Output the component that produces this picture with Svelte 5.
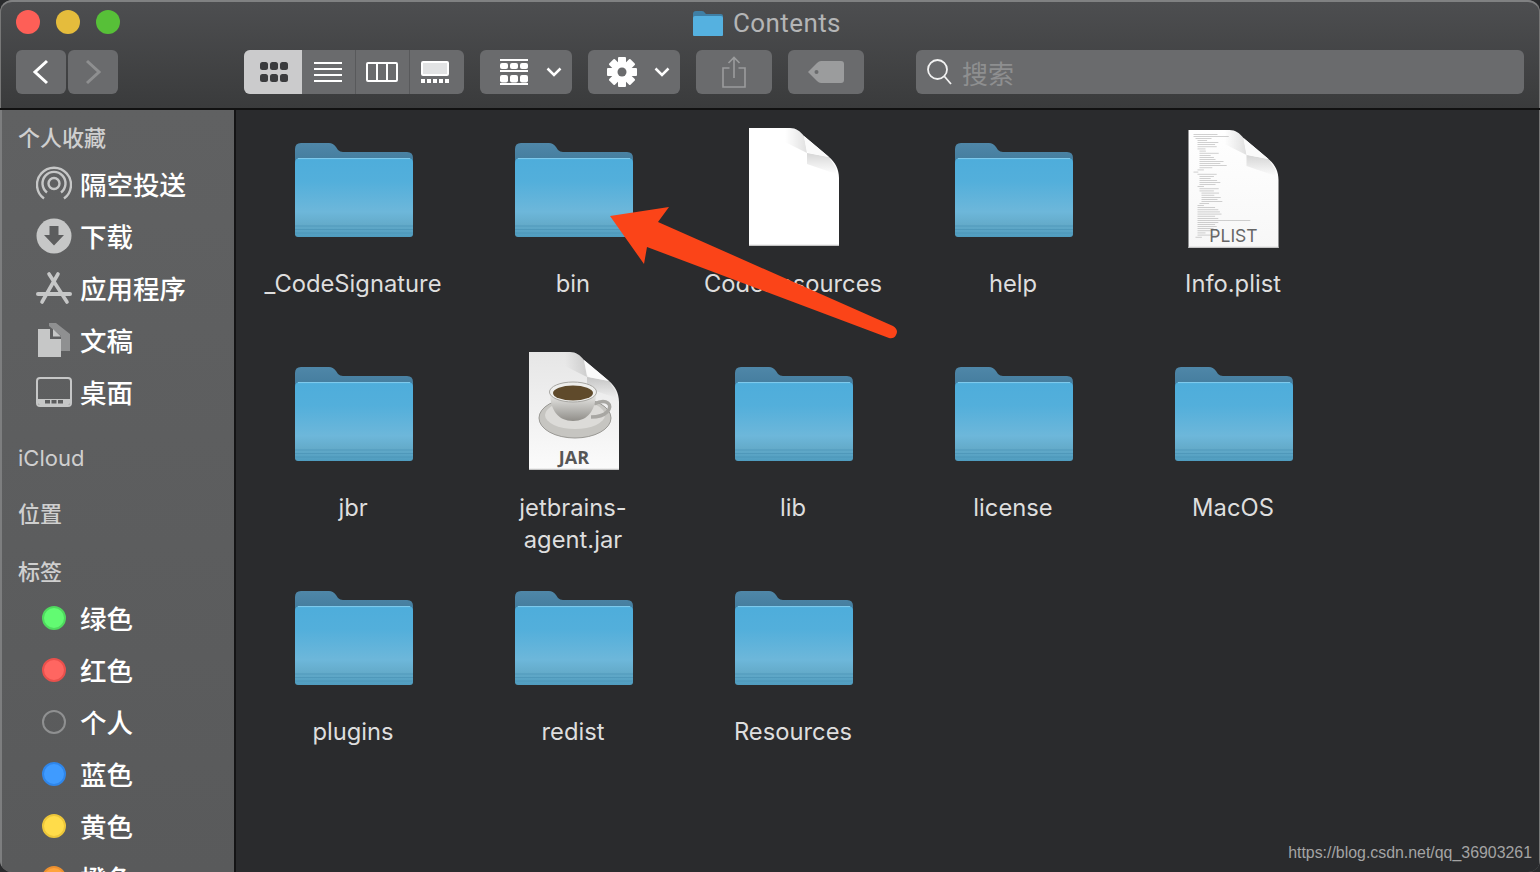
<script>
  const favorites = [
    { name: '隔空投送', icon: 'airdrop' },
    { name: '下载', icon: 'download' },
    { name: '应用程序', icon: 'apps' },
    { name: '文稿', icon: 'docs' },
    { name: '桌面', icon: 'desktop' }
  ];

  const tags = [
    { name: '绿色', fill: '#62fb72', edge: '#4fd95e' },
    { name: '红色', fill: '#ff6661', edge: '#e9504c' },
    { name: '个人', fill: 'transparent', edge: '#8f9091' },
    { name: '蓝色', fill: '#3f9bff', edge: '#2f86ea' },
    { name: '黄色', fill: '#ffdc4a', edge: '#ecc63a' },
    { name: '橙色', fill: '#ffa43c', edge: '#ec9030' }
  ];

  const files = [
    { name: '_CodeSignature', kind: 'folder' },
    { name: 'bin', kind: 'folder' },
    { name: 'CodeResources', kind: 'doc' },
    { name: 'help', kind: 'folder' },
    { name: 'Info.plist', kind: 'plist' },
    { name: 'jbr', kind: 'folder' },
    { name: 'jetbrains-\nagent.jar', kind: 'jar' },
    { name: 'lib', kind: 'folder' },
    { name: 'license', kind: 'folder' },
    { name: 'MacOS', kind: 'folder' },
    { name: 'plugins', kind: 'folder' },
    { name: 'redist', kind: 'folder' },
    { name: 'Resources', kind: 'folder' }
  ];

  // tiny code lines on the plist preview: [indent, width]
  const plistLines = [
    [5, 30], [5, 44], [7, 20], [9, 12], [9, 26], [9, 22], [9, 24], [9, 10], [11, 8],
    [11, 24], [11, 14], [11, 18], [11, 20], [11, 30], [11, 26], [11, 34], [11, 16], [9, 8],
    [5, 6], [9, 24], [11, 18], [11, 14], [11, 22], [11, 26], [11, 20], [9, 8], [11, 24],
    [11, 18], [13, 22], [13, 16], [13, 24], [13, 20], [13, 26], [11, 12], [9, 8], [9, 22],
    [9, 26], [9, 28], [9, 30], [9, 22], [9, 26], [9, 66], [9, 26], [9, 22], [9, 24], [9, 20],
    [9, 18], [9, 10], [9, 24], [7, 8]
  ];
</script>

{#snippet docSheet(id, top, bottom)}
  <defs>
    <linearGradient id="{id}-sheet" x1="0" y1="0" x2="0" y2="1">
      <stop offset="0" stop-color={top} />
      <stop offset="1" stop-color={bottom} />
    </linearGradient>
    <linearGradient id="{id}-under" x1="0" y1="0" x2="0" y2="1">
      <stop offset="0" stop-color="#000" stop-opacity="0.16" />
      <stop offset="1" stop-color="#000" stop-opacity="0" />
    </linearGradient>
    <linearGradient id="{id}-side" x1="0" y1="0" x2="1" y2="0">
      <stop offset="0" stop-color="#000" stop-opacity="0" />
      <stop offset="1" stop-color="#000" stop-opacity="0.12" />
    </linearGradient>
  </defs>
  <path d="M0 0H41C47 0 51 3 55 8L80 29C86 34 90 41 90 50V118H0Z" fill="url(#{id}-sheet)" />
  <path d="M36 0H41C47 0 51 3 55 8L58 25L36 14Z" fill="url(#{id}-side)" />
  <path d="M58 25L80 29L87 40V46L58 36Z" fill="url(#{id}-under)" />
  <path d="M55 8L58 23Q59 25 62 25.500L80 29Z" fill="#fafafa" />
  <path d="M0 117.400H90" stroke="#c4c4c4" stroke-width="1.200" />
{/snippet}

<div class="window">
  <header class="toolbar">
    <div class="title">
      <svg width="30" height="25" viewBox="0 0 30 25">
        <path d="M0 3Q0 0 3 0H9Q11 0 12 2L13 3H28Q30 3 30 5V12H0Z" fill="#3f7fa5" />
        <path d="M0 7Q0 5 2 5H28Q30 5 30 7V24Q30 25 29 25H1Q0 25 0 24Z" fill="#55b1e0" />
      </svg>
      <span>Contents</span>
    </div>
    <div class="tools">
      <div class="nav">
        <button class="btn nav-btn" aria-label="Back">
          <svg width="18" height="26" viewBox="0 0 18 26"><path d="M15 2L3 13L15 24" class="line white" /></svg>
        </button>
        <button class="btn nav-btn" aria-label="Forward">
          <svg width="18" height="26" viewBox="0 0 18 26"><path d="M3 2L15 13L3 24" class="line dim" /></svg>
        </button>
      </div>

      <div class="views btn">
        <span class="view active">
          <svg width="28" height="20" viewBox="0 0 28 20" fill="#3b3c3e">
            {#each [0, 10, 20] as x}
              {#each [0, 12] as y}
                <rect {x} {y} width="8" height="8" rx="2.500" />
              {/each}
            {/each}
          </svg>
        </span>
        <span class="view v2">
          <svg width="28" height="20" viewBox="0 0 28 20" fill="#fff">
            <rect y="0" width="28" height="2" /><rect y="6" width="28" height="2" />
            <rect y="12" width="28" height="2" /><rect y="18" width="28" height="2" />
          </svg>
        </span>
        <span class="view v3">
          <svg width="32" height="20" viewBox="0 0 32 20" fill="none" stroke="#fff" stroke-width="2">
            <rect x="1" y="1" width="30" height="18" rx="1" /><path d="M11 1V19M21 1V19" />
          </svg>
        </span>
        <span class="view v4">
          <svg width="28" height="22" viewBox="0 0 28 22">
            <rect x="1" y="1" width="26" height="13" rx="1" fill="#e2e3e4" stroke="#fff" stroke-width="2" />
            {#each [0, 6, 12, 18, 24] as x}
              <rect {x} y="18" width="4" height="4" fill="#fff" />
            {/each}
          </svg>
        </span>
      </div>

      <button class="btn drop arrange" aria-label="Arrange">
        <svg width="28" height="26" viewBox="0 0 28 26" fill="#fff">
          <rect width="28" height="2" /><rect y="11" width="28" height="2" /><rect y="24" width="28" height="2" />
          {#each [0, 10, 20] as x}
            <rect {x} y="4" width="8" height="6" rx="2" /><rect {x} y="16" width="8" height="7.500" rx="2" />
          {/each}
        </svg>
        <svg class="chev" width="16" height="10" viewBox="0 0 16 10"><path d="M1.500 1.500L8 8L14.500 1.500" class="line white thin" /></svg>
      </button>

      <button class="btn drop action" aria-label="Action">
        <svg width="30" height="30" viewBox="0 0 30 30">
          {#each [0, 45, 90, 135] as deg}
            <rect x="11" y="0" width="8" height="30" rx="1" fill="#fff" transform="rotate({deg} 15 15)" />
          {/each}
          <circle cx="15" cy="15" r="10" fill="#fff" />
          <circle cx="15" cy="15" r="4.500" fill="#6a6b6d" />
        </svg>
        <svg class="chev" width="16" height="10" viewBox="0 0 16 10"><path d="M1.500 1.500L8 8L14.500 1.500" class="line white thin" /></svg>
      </button>

      <button class="btn share" aria-label="Share">
        <svg width="24" height="32" viewBox="0 0 24 32" fill="none" stroke="#9b9c9d" stroke-width="1.600">
          <path d="M7.500 12H1V31H23V12H16.500" /><path d="M12 22V1.500M6.500 7L12 1.500L17.500 7" />
        </svg>
      </button>

      <button class="btn tag" aria-label="Tag">
        <svg width="36" height="22" viewBox="0 0 36 22">
          <path d="M0 11L9 2Q11 0 13 0H33Q36 0 36 3V19Q36 22 33 22H13Q11 22 9 20Z" fill="#9b9c9d" />
          <circle cx="8.500" cy="11" r="2" fill="#6a6b6d" />
        </svg>
      </button>

      <div class="btn search">
        <svg width="26" height="28" viewBox="0 0 26 28" fill="none" stroke="#f2f2f2" stroke-width="1.800">
          <circle cx="11.500" cy="11.500" r="9.500" /><path d="M18.500 18.500L25 26" />
        </svg>
        <span>搜索</span>
      </div>
    </div>
  </header>

  <div class="body">
    <aside class="sidebar">
      <h4>个人收藏</h4>
      {#each favorites as item}
        <div class="row">
          <span class="row-icon">
            {#if item.icon === 'airdrop'}
              <svg width="36" height="36" viewBox="0 0 36 36" fill="none" stroke="#c6c7c7" stroke-width="2.400">
                <path d="M8 32.500A17 17 0 1 1 28 32.500" /><path d="M11 26.500A11.500 11.500 0 1 1 25 26.500" />
                <circle cx="18" cy="17.500" r="5.500" />
              </svg>
            {:else if item.icon === 'download'}
              <svg width="36" height="36" viewBox="0 0 36 36">
                <circle cx="18" cy="18" r="17.500" fill="#c6c7c7" />
                <path d="M13.500 8H22.500V17H28L18 27.500L8 17H13.500Z" fill="#5c5d5e" />
              </svg>
            {:else if item.icon === 'apps'}
              <svg width="36" height="34" viewBox="0 0 36 34" fill="none" stroke="#c6c7c7" stroke-width="4" stroke-linecap="round">
                <path d="M22 3L6 31M13 3L31 31" stroke-width="3.600" /><path d="M2 23H34" />
              </svg>
            {:else if item.icon === 'docs'}
              <svg class="docs-icon" width="32" height="34" viewBox="0 0 32 34">
                <path d="M11 0H18L32 11V28H23V13L11 3Z" fill="#8f9091" />
                <path d="M0 6H12V16H23V34H0Z" fill="#c6c7c7" />
                <path d="M15 6L23 13.500H15Z" fill="#c6c7c7" />
              </svg>
            {:else}
              <svg width="36" height="30" viewBox="0 0 36 30">
                <rect x="1" y="1" width="34" height="28" rx="3" fill="none" stroke="#c6c7c7" stroke-width="2" />
                <path d="M2 22H34V26Q34 28 32 28H4Q2 28 2 26Z" fill="#c6c7c7" />
                <rect x="9" y="23" width="5" height="3.500" fill="#5c5d5e" /><rect x="15.500" y="23" width="5" height="3.500" fill="#5c5d5e" /><rect x="22" y="23" width="5" height="3.500" fill="#5c5d5e" />
              </svg>
            {/if}
          </span>
          <span>{item.name}</span>
        </div>
      {/each}
      <h4 class="cloud">iCloud</h4>
      <h4 class="place">位置</h4>
      <h4 class="tag-head">标签</h4>
      {#each tags as t}
        <div class="row">
          <span class="row-icon">
            <i class="dot" style="background: {t.fill}; border-color: {t.edge}"></i>
          </span>
          <span>{t.name}</span>
        </div>
      {/each}
    </aside>

    <main class="content">
      <div class="grid">
        {#each files as file, i}
          <div class="cell">
            <div class="icon {file.kind}">
              {#if file.kind === 'folder'}
                <svg width="118" height="94" viewBox="0 0 118 94">
                  <defs>
                    <linearGradient id="front{i}" x1="0" y1="0" x2="0" y2="1">
                      <stop offset="0" stop-color="#4eaddb" />
                      <stop offset="0.3" stop-color="#53afdb" />
                      <stop offset="0.68" stop-color="#6db7da" />
                      <stop offset="0.84" stop-color="#64abca" />
                      <stop offset="1" stop-color="#4f9cbf" />
                    </linearGradient>
                    <linearGradient id="back{i}" x1="0" y1="0" x2="0" y2="1">
                      <stop offset="0" stop-color="#4f87a8" />
                      <stop offset="1" stop-color="#3d7698" />
                    </linearGradient>
                  </defs>
                  <path d="M0 6Q0 0 6 0H34Q38 0 41 4L43 7Q45 9 48 9H112Q118 9 118 15V30H0Z" fill="url(#back{i})" />
                  <path d="M0 20Q0 15 5 15H113Q118 15 118 20V91Q118 94 115 94H3Q0 94 0 91Z" fill="url(#front{i})" />
                  <path d="M3 15.600H115" stroke="#83cdee" stroke-width="1" />
                  <path d="M0 83H118M0 86.500H118M0 90H118" stroke="#4a93b6" stroke-width="1" opacity="0.7" />
                </svg>
              {:else if file.kind === 'doc'}
                <svg width="90" height="118" viewBox="0 0 90 118">
                  {@render docSheet('doc', '#ffffff', '#ffffff')}
                </svg>
              {:else if file.kind === 'plist'}
                <svg width="91" height="118" viewBox="0 0 90 118">
                  {@render docSheet('pl', '#ffffff', '#f7f7f7')}
                  {#each plistLines as [x, w], n}
                    <rect {x} y={4 + n * 2.1} width={w * 0.8} height="0.500" fill="#a2a2a2" />
                  {/each}
                  <text x="45" y="112" text-anchor="middle" class="plist-label">PLIST</text>
                </svg>
              {:else}
                <svg width="90" height="118" viewBox="0 0 90 118">
                  {@render docSheet('jar', '#e6e6e6', '#fbfbfb')}
                  <defs>
                    <linearGradient id="cup" x1="0" y1="0" x2="0" y2="1">
                      <stop offset="0" stop-color="#f2f2f0" />
                      <stop offset="1" stop-color="#908e89" />
                    </linearGradient>
                  </defs>
                  <ellipse cx="46" cy="66" rx="36" ry="20" fill="#c6c5c1" stroke="#9a9995" />
                  <ellipse cx="46" cy="63" rx="30" ry="14" fill="#dcdbd8" />
                  <path d="M65 52C78 46 85 53 78 60C74 64 68 65 62 65" fill="none" stroke="#a8a7a3" stroke-width="3.500" />
                  <path d="M21 40C21 58 29 69 44 69C59 69 67 58 67 40Z" fill="url(#cup)" />
                  <ellipse cx="44" cy="40" rx="23.500" ry="10" fill="#eeeeec" stroke="#a7a6a2" />
                  <ellipse cx="44" cy="41" rx="20" ry="7.500" fill="#5f4a2b" />
                  <text x="45" y="112" text-anchor="middle" class="jar-label">JAR</text>
                </svg>
              {/if}
            </div>
            <div class="label">{file.name}</div>
          </div>
        {/each}
      </div>
    </main>
  </div>

  <!-- red annotation drawn on top of the screenshot -->
  <svg class="arrow" width="1540" height="872" viewBox="0 0 1540 872">
    <path d="M610 216L669 207L658 222L893 326Q899 330 896 335Q894 339 889 338L647 247L644 264Z" fill="#fb4418" />
  </svg>
  <div class="watermark">https://blog.csdn.net/qq_36903261</div>
</div>

<style>
  :global(body) {
    margin: 0;
    background: #2a2b2d;
    overflow: hidden;
  }

  .window {
    position: relative;
    width: 1540px;
    height: 872px;
    display: flex;
    flex-direction: column;
    overflow: hidden;
    border-radius: 12px;
    background: #2a2b2d;
    box-shadow: inset 0 0 0 1px #777;
    font-family: Inter, "Noto Sans CJK SC", sans-serif;
  }

  .toolbar {
    height: 108px;
    flex: none;
    box-sizing: border-box;
    background: linear-gradient(#4d4e50, #3a3b3c);
    border-top: 2px solid #808182;
    border-left: 1px solid #777;
    border-right: 1px solid #777;
    border-radius: 12px 12px 0 0;
    position: relative;
  }

  .title {
    height: 42px;
    padding-right: 6px;
    display: flex;
    align-items: center;
    justify-content: center;
    gap: 10px;
    color: #b4b5b6;
    font-size: 26px;
    font-family: Roboto, sans-serif;
    letter-spacing: 0.4px;
  }

  .title::before {
    content: '';
    position: absolute;
    left: 15px;
    top: 8px;
    height: 24px;
    border-radius: 50%;
    background: #fe5f57;
    width: 24px;
    box-shadow: 40px 0 0 #e5bc3c, 80px 0 0 #57c038;
  }

  .tools {
    display: flex;
    align-items: stretch;
    height: 44px;
    margin-top: 6px;
    padding-left: 15px;
  }

  .btn {
    background: #6a6b6d;
    border: none;
    border-radius: 6px;
    padding: 0;
    display: flex;
    align-items: center;
    justify-content: center;
  }

  .nav {
    display: flex;
    gap: 2px;
    margin-right: 126px;
  }

  .nav-btn {
    width: 50px;
  }

  .line {
    fill: none;
    stroke-width: 3;
  }

  .white {
    stroke: #fff;
  }

  .dim {
    stroke: #8e8f90;
  }

  .thin {
    stroke-width: 2.500;
  }

  .views {
    width: 220px;
    margin-right: 16px;
    overflow: hidden;
    justify-content: flex-start;
    align-items: stretch;
  }

  .view {
    display: flex;
    align-items: center;
    justify-content: center;
    box-sizing: border-box;
  }

  .active {
    width: 58px;
    background: #cbcbcc;
    padding-left: 2px;
  }

  .v2 {
    width: 54px;
    padding-right: 2px;
    border-right: 1px solid #58595b;
  }

  .v3 {
    width: 54px;
    padding-right: 2px;
    border-right: 1px solid #58595b;
  }

  .v4 {
    width: 54px;
    padding-right: 4px;
  }

  .drop {
    width: 92px;
    margin-right: 16px;
    gap: 0;
    justify-content: flex-start;
  }

  .arrange > svg:first-child {
    margin-left: 20px;
    margin-right: 18px;
  }

  .action > svg:first-child {
    margin-left: 19px;
    margin-right: 17px;
  }

  .share,
  .tag {
    width: 76px;
    margin-right: 16px;
  }

  .tag {
    margin-right: 52px;
  }

  .search {
    width: 608px;
    justify-content: flex-start;
    padding-left: 10px;
    box-sizing: border-box;
    gap: 10px;
    color: #8e8f90;
    font-size: 26px;
    font-family: "Noto Sans CJK SC", sans-serif;
  }

  .body {
    flex: 1;
    min-height: 0;
    display: flex;
    border-top: 2px solid #111;
  }

  .sidebar {
    width: 236px;
    flex: none;
    box-sizing: border-box;
    background: linear-gradient(#606162, #595a5b);
    border-right: 2px solid #141415;
    border-left: 2px solid #7d7e7f;
    padding-left: 16px;
    padding-top: 10px;
    overflow: hidden;
    color: #fff;
    font-family: "Noto Sans CJK SC", sans-serif;
  }

  h4 {
    margin: 0;
    height: 32px;
    line-height: 32px;
    font-size: 22px;
    font-weight: 500;
    color: #cfcfcf;
  }

  .cloud {
    margin-top: 24px;
    font-weight: 400;
    font-family: Inter, sans-serif;
  }

  .place {
    margin-top: 22px;
  }

  .tag-head {
    margin-top: 26px;
  }

  .row {
    height: 52px;
    display: flex;
    align-items: center;
    font-size: 26.500px;
    line-height: 52px;
    font-weight: 500;
  }

  h4 + .row {
    margin-top: 6px;
  }

  .row-icon {
    width: 44px;
    margin-left: 18px;
    margin-right: 0;
    display: flex;
    align-items: center;
    flex: none;
  }

  .docs-icon {
    margin-left: 2px;
  }

  .dot {
    display: block;
    box-sizing: border-box;
    width: 24px;
    height: 24px;
    margin-left: 6px;
    border-radius: 50%;
    border: 2px solid;
  }

  .content {
    flex: 1;
    min-width: 0;
    background: #2a2b2d;
    padding-left: 7px;
    border-right: 1px solid #777;
  }

  .grid {
    display: grid;
    grid-template-columns: repeat(5, 220px);
    grid-auto-rows: 224px;
    padding-top: 18px;
  }

  .cell {
    display: flex;
    flex-direction: column;
    align-items: center;
  }

  .icon {
    height: 118px;
    display: flex;
    align-items: flex-end;
    margin-bottom: 22px;
  }

  .folder {
    height: 109px;
    margin-top: 9px;
    padding-left: 2px;
  }

  .icon svg {
    display: block;
  }

  .folder svg {
    margin-bottom: 9px;
  }

  .doc,
  .jar {
    padding-left: 2px;
  }

  .plist {
    margin-top: 2px;
    margin-bottom: 20px;
  }

  .label {
    color: #dedede;
    font-size: 23.750px;
    line-height: 32px;
    text-align: center;
    white-space: pre-line;
    font-family: Inter, sans-serif;
  }

  .plist-label {
    font-family: Inter, sans-serif;
    font-size: 17.500px;
    fill: #666;
  }

  .jar-label {
    font-family: "Open Sans", sans-serif;
    font-weight: 700;
    font-size: 18px;
    fill: #565656;
  }

  .arrow {
    position: absolute;
    inset: 0;
    pointer-events: none;
  }

  .watermark {
    position: absolute;
    right: 8px;
    bottom: 9px;
    color: #a4a4a4;
    font-size: 15.900px;
    line-height: 20px;
    font-family: "Liberation Sans", sans-serif;
  }
</style>
